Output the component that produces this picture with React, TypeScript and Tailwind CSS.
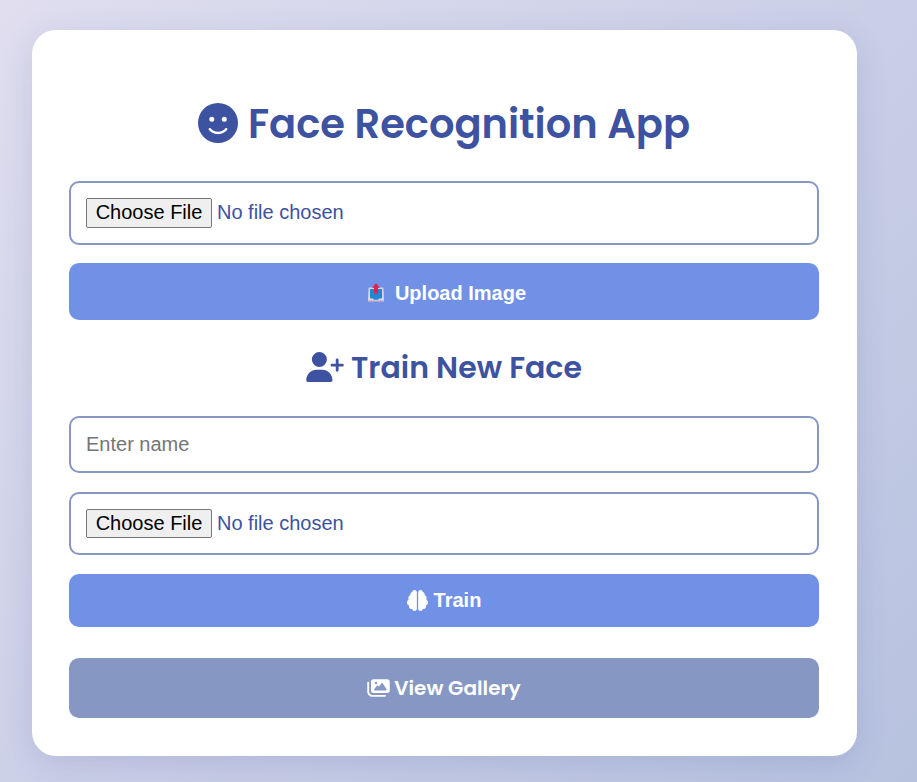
import React from "react";
import { FaBrain, FaFaceSmile, FaImages, FaUserPlus } from "react-icons/fa6";

const heading =
  "flex items-center justify-center whitespace-nowrap font-['Poppins',sans-serif] font-semibold";
const field =
  "block w-full rounded-[10px] border-2 border-[#8697c4] bg-white px-[15px] font-['Liberation_Sans',Arial,sans-serif] text-[20px] text-[#3d52a0] placeholder:text-[#757575]";
const button =
  "flex w-full items-center justify-center rounded-[10px] bg-[#7091e6] font-['Liberation_Sans',Arial,sans-serif] text-[20px] font-bold text-white";

function OutboxIcon() {
  return (
    <svg width="18" height="20" viewBox="0 0 18 20" className="mr-[10px]">
      <path d="M2.200 4.500h13.600q.5 0 .6.500l.6 11.500v1.700q0 .8-.8.8H1.800q-.8 0-.8-.8v-1.700L1.600 5q.1-.5.6-.5z" fill="#d9d6e6" />
      <path d="M3 6h12v8.500q0 1-1 1h-2l-1 1.200H7l-1-1.200H4q-1 0-1-1z" fill="#2586d4" />
      <path d="M1 17.500h16v.7q0 .8-.8.8H1.800q-.8 0-.8-.8z" fill="#b3a3cb" />
      <path d="M9 .3l4 4.400h-2v5.800H7V4.700H5z" fill="#dc244f" />
    </svg>
  );
}

function FilePicker({ className }: { className: string }) {
  return (
    <input
      type="file"
      className={`${field} ${className} file:mr-[5px] file:box-border file:w-[126px] file:rounded-[2px] file:border file:border-solid file:border-[#767676] file:bg-[#efefef] file:p-0 file:text-center file:text-black`}
    />
  );
}

export default function App() {
  return (
    <main className="h-[782px] w-full bg-[linear-gradient(135deg,#e0deef_0%,#cdd1e8_45%,#b7c2df_100%)] pl-8 pt-[30px]">
      <section className="flex h-[726px] w-[825px] flex-col rounded-[24px] bg-white pl-[37px] pr-[38px] shadow-[0_8px_32px_rgba(61,82,160,0.16)]">
        <h1 className={`${heading} mt-[63px] h-[60px] text-[40px] text-[#3d52a0]`}>
          <FaFaceSmile className="mr-[10px] size-[40px]" />
          <span className="pt-[2px]">Face Recognition App</span>
        </h1>
        <FilePicker className="mt-[28px] h-[64px] pt-[14px] file:h-[30px] file:pb-[2px] file:leading-[24px]" />
        <button className={`${button} mt-[18px] h-[57px] pl-[5px] pt-[2px]`}>
          <OutboxIcon />
          Upload Image
        </button>
        <h2 className={`${heading} mt-[25px] h-[44px] text-[30px] text-[#3d52a0]`}>
          <FaUserPlus className="mr-[7px] h-[30px] w-[38px]" />
          <span>Train New Face</span>
        </h2>
        <input type="text" placeholder="Enter name" className={`${field} mt-[27px] h-[57px]`} />
        <FilePicker className="mt-[19px] h-[63px] pt-[14px] file:h-[29px] file:leading-[26px]" />
        <button className={`${button} mt-[19px] h-[53px] pb-px`}>
          <FaBrain className="mr-[6px] size-[21px]" />
          Train
        </button>
        <a className={`${heading} mt-[31px] h-[60px] rounded-[10px] bg-[#8697c4] text-[20px] text-white`}>
          <FaImages className="mr-[4px] h-[20px] w-[23px]" />
          <span>View Gallery</span>
        </a>
      </section>
    </main>
  );
}
